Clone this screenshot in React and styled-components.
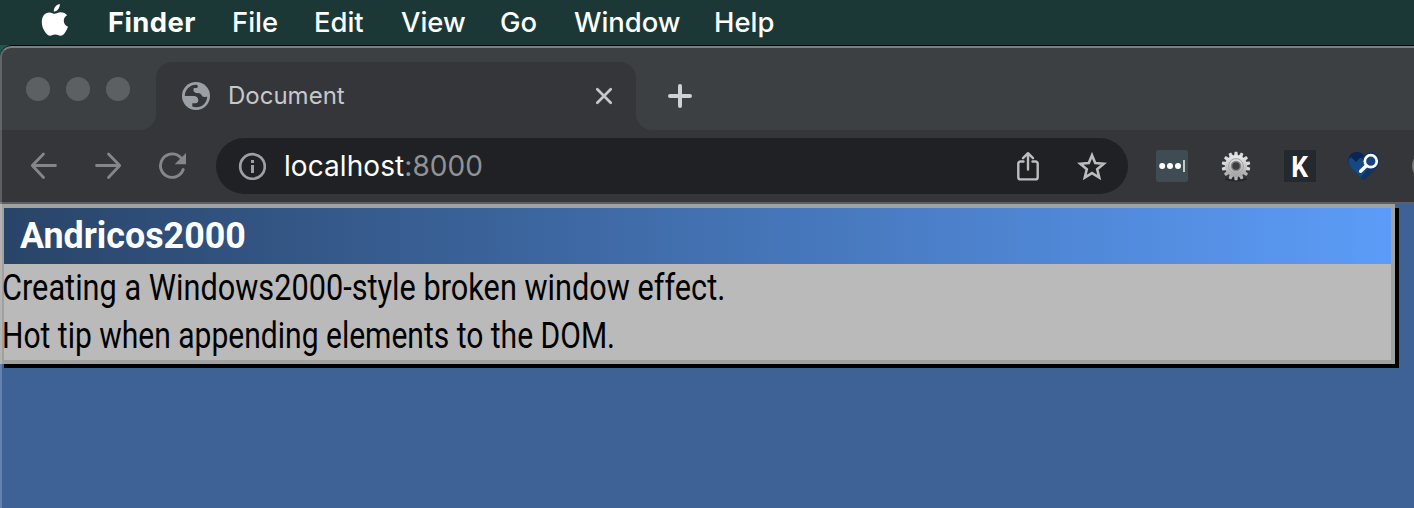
import React from "react";
import styled, { createGlobalStyle } from "styled-components";

const Global = createGlobalStyle`
  * { box-sizing: border-box; }
  html, body { margin: 0; padding: 0; }
  body { background: #1b3836; overflow: hidden; font-family: Inter, "Liberation Sans", sans-serif; }
  svg { display: block; flex: none; }
`;

const Desktop = styled.div`
  width: 1414px;
  height: 508px;
  display: flex;
  flex-direction: column;
  overflow: hidden;
  background: #1f5652;
`;

const MenuBar = styled.nav`
  flex: none;
  height: 45px;
  background: #1b3836;
  display: flex;
  align-items: flex-start;
  padding-left: 41px;
  color: #fff;
`;

const MenuItem = styled.span`
  flex: none;
  width: ${(p) => p.$width}px;
  font-size: 27.4px;
  line-height: 44px;
  white-space: nowrap;
  font-weight: ${(p) => (p.$bold ? 700 : 500)};
  letter-spacing: ${(p) => (p.$bold ? 0.4 : 0)}px;
`;

const AppleSlot = styled.span`
  width: 67px;
  margin-top: 4px;
`;

const BrowserWindow = styled.div`
  position: relative;
  flex: 1;
  display: flex;
  flex-direction: column;
  border-top: 1px solid #050807;
  border-radius: 12px 0 0 0;
  overflow: hidden;
  background: #3c4043;
  &::after {
    content: "";
    position: absolute;
    inset: 0 -20px -20px 0;
    border: 2px solid rgba(255, 255, 255, 0.2);
    border-top-color: rgba(255, 255, 255, 0.33);
    border-radius: 11px 0 0 0;
    pointer-events: none;
  }
`;

const TabStrip = styled.div`
  flex: none;
  height: 84px;
  padding: 16px 0 0 26px;
  display: flex;
  align-items: flex-start;
  background: #3c4043;
`;

const TrafficLights = styled.div`
  display: flex;
  gap: 16px;
  width: 130px;
  padding-top: 15px;
`;

const Light = styled.i`
  width: 24px;
  height: 24px;
  border-radius: 50%;
  background: #5d6063;
`;

const Tab = styled.div`
  position: relative;
  width: 480px;
  height: 68px;
  display: flex;
  align-items: center;
  padding: 0 22px 0 26px;
  border-radius: 16px 16px 0 0;
  background: #35363a;
  &::before, &::after {
    content: "";
    position: absolute;
    bottom: 0;
    width: 16px;
    height: 16px;
  }
  &::before {
    left: -16px;
    background: radial-gradient(circle at 0 0, transparent 15.5px, #35363a 16.2px);
  }
  &::after {
    right: -16px;
    background: radial-gradient(circle at 100% 0, transparent 15.5px, #35363a 16.2px);
  }
`;

const TabTitle = styled.span`
  flex: 1;
  margin-left: 18px;
  color: #c7c8ca;
  font-size: 24px;
  letter-spacing: 0;
  line-height: 68px;
`;

const NewTab = styled.div`
  padding: 22px 0 0 32px;
`;

const Toolbar = styled.div`
  flex: none;
  height: 74px;
  display: flex;
  align-items: flex-start;
  padding: 8px 0 0 30px;
  background: #35363a;
  border-bottom: 2px solid #5e5f62;
`;

const NavButtons = styled.div`
  flex: none;
  width: 186px;
  height: 56px;
  display: flex;
  align-items: center;
  gap: 36px;
`;

const AddressBar = styled.div`
  flex: none;
  width: 912px;
  height: 56px;
  display: flex;
  align-items: center;
  padding: 0 20px 0 22px;
  border-radius: 28px;
  background: #202124;
`;

const Address = styled.span`
  flex: 1;
  margin-left: 18px;
  font-size: 28px;
  letter-spacing: 0.07px;
  line-height: 56px;
  color: #fff;
`;

const Port = styled.span`
  color: #919295;
`;

const AddressActions = styled.div`
  display: flex;
  gap: 32px;
`;

const Extensions = styled.div`
  flex: none;
  display: flex;
  align-items: center;
  gap: 32px;
  height: 56px;
  padding-left: 28px;
`;

const KeyTile = styled.span`
  width: 32px;
  height: 32px;
  background: #242930;
  color: #fff;
  font: 700 30px/33px Roboto, sans-serif;
  text-align: center;
`;

const KeyGlyph = styled.span`
  display: inline-block;
  transform: scaleX(0.88);
`;

const Avatar = styled.i`
  flex: none;
  width: 32px;
  height: 32px;
  border-radius: 50%;
  background: #77787a;
`;

const Page = styled.main`
  flex: 1;
  background: #3e6296;
`;

const RetroWindow = styled.section`
  width: 1395px;
  height: 160px;
  border: 4px solid #a1a1a0;
  box-shadow: 4px 4px 0 #000;
  background: #bababa;
  font-family: Roboto, "Liberation Sans", sans-serif;
`;

const RetroTitle = styled.h1`
  margin: 0;
  height: 56px;
  padding-left: 16px;
  background: linear-gradient(to right, #294468, #5c9cf8);
  color: #fff;
  font-size: 36px;
  font-weight: 700;
  line-height: 56px;
`;

const RetroLine = styled.p`
  margin: 0 0 0 -2px;
  height: 48px;
  color: #000;
  font-size: 36px;
  line-height: 48px;
  white-space: nowrap;
`;

const Squeeze = styled.span`
  display: inline-block;
  transform: scaleX(${(p) => p.$x});
  transform-origin: 0 50%;
`;

const AppleIcon = () => (
  <svg width="27" height="33" viewBox="0 0 27 33" fill="#fff">
    <path d="M18.8 0c.2 2-.6 3.900-1.700 5.300-1.200 1.500-2.900 2.400-4.300 2.200-.2-1.900.6-3.800 1.700-5.100C15.600 1 17.500.1 18.800 0z" />
    <path d="M26.100 11.300c-2.100 1.200-3.300 3-3.300 5.500 0 2.900 1.700 5 4.200 6-.6 1.900-1.500 3.600-2.600 5.200-1.300 2-2.800 3.800-5 3.800-2 0-2.700-1.200-5.100-1.200s-3.200 1.200-5.100 1.200c-2.300 0-3.900-2-5.300-4C1.700 24.700.8 21.300.8 17.800.8 12.200 4 8.400 8.300 8.400c2.300 0 4.100 1.400 5.500 1.400s3.300-1.500 5.900-1.500c2.500 0 4.900 1.200 6.400 3z" />
  </svg>
);

const GlobeIcon = () => (
  <svg width="28" height="28" viewBox="0 0 28 28">
    <circle cx="14" cy="14" r="14" fill="#9aa0a6" />
    <path d="M2.800 14C2.800 8.300 7.300 3.200 13.600 2.800 16.200 2.700 16.400 4.600 15 6h-2.300c-.9 0-1.300.7-1.300 1.600 0 1.600.9 3.200 2.800 3.500l3.200.2c2.100.3 2.300 3.800 4.900 3.700l2.900-.3C25 20.500 20.700 25.200 14 25.200c-1.500 0-2.700-.3-3.700-.7v-3.300h3.200c1.700 0 2.800-1.200 2.800-3 0-2.400-1.900-4.200-4.300-4.200z" fill="#35363a" />
  </svg>
);

const CloseIcon = () => (
  <svg width="20" height="20" viewBox="0 0 20 20" fill="none" stroke="#c7c8ca" strokeWidth="2.700" strokeLinecap="round">
    <path d="M3.300 3.300 16.700 16.700M16.700 3.300 3.300 16.700" />
  </svg>
);

const PlusIcon = () => (
  <svg width="24" height="24" viewBox="0 0 24 24" fill="none" stroke="#d0d1d2" strokeWidth="4" strokeLinecap="round">
    <path d="M12 2v20M2 12h20" />
  </svg>
);

const ArrowIcon = ({ flip }) => (
  <svg width="28" height="28" viewBox="0 0 28 28" fill="none" stroke="#858688" strokeWidth="2.800" strokeLinecap="round" strokeLinejoin="round">
    <g transform={flip ? "translate(28 0) scale(-1 1)" : undefined}>
      <path d="M25.500 13.500H2.500M13.500 2 2.300 13.500 13.500 25.500" />
    </g>
  </svg>
);

const ReloadIcon = () => (
  <svg width="28" height="28" viewBox="0 0 28 28" fill="none" stroke="#858688" strokeWidth="2.900">
    <path d="M25.200 17.500A11.700 11.700 0 1 1 22.600 5.500" strokeLinecap="round" />
    <path d="M28 1v11.200H16.700z" fill="#858688" stroke="none" />
  </svg>
);

const InfoIcon = () => (
  <svg width="28" height="28" viewBox="0 0 28 28" fill="none" stroke="#9aa0a6" strokeWidth="2.700">
    <circle cx="14.500" cy="14.500" r="12.300" />
    <path d="M14.500 13v8M14.500 8v3" strokeWidth="3" />
  </svg>
);

const ShareIcon = () => (
  <svg width="32" height="32" viewBox="0 0 32 32" fill="none" stroke="#bcbdbe" strokeWidth="2.400" strokeLinecap="round" strokeLinejoin="round">
    <path d="M11.500 11.500H8.500a2.200 2.200 0 0 0-2.200 2.200v13.500a2.200 2.200 0 0 0 2.200 2.200h15a2.200 2.200 0 0 0 2.200-2.200V13.700a2.200 2.200 0 0 0-2.200-2.200h-3" />
    <path d="M16 19.500V3.500M11 8.200l5-5 5 5" />
  </svg>
);

const StarIcon = () => (
  <svg width="32" height="32" viewBox="0 0 32 32" fill="none" stroke="#bcbdbe" strokeWidth="2.600">
    <path d="m16 5.300 3.200 7.800 8.500.7-6.500 5.500 2 8.200-7.200-4.400-7.200 4.400 2-8.200-6.500-5.500 8.500-.7z" />
  </svg>
);

const DotsIcon = () => (
  <svg width="32" height="32" viewBox="0 0 32 32">
    <rect width="32" height="32" rx="2.500" fill="#404c54" />
    <g fill="#fff">
      <circle cx="6.200" cy="16" r="3" />
      <circle cx="14" cy="16" r="3" />
      <circle cx="22" cy="16" r="3" />
      <rect x="27" y="10" width="2" height="12" fill="#c5c9cc" />
    </g>
  </svg>
);

const GearIcon = () => (
  <svg width="32" height="32" viewBox="0 0 32 32">
    <defs>
      <linearGradient id="steel" x1="0" y1="0" x2="0" y2="1">
        <stop offset="0" stopColor="#ededed" />
        <stop offset="1" stopColor="#a2a2a2" />
      </linearGradient>
    </defs>
    <ellipse cx="16" cy="29" rx="11" ry="2.500" fill="#252629" />
    {Array.from({ length: 14 }, (_, i) => (
      <path key={i} d="M13.900 7 14.600 1.700h2.800l.7 5.300z" fill={i > 4 && i < 10 ? "#b4b4b4" : "#dcdcdc"} transform={`rotate(${(i * 360) / 14} 16 16)`} />
    ))}
    <circle cx="16" cy="16" r="11" fill="url(#steel)" />
    <circle cx="16" cy="16" r="7.400" fill="none" stroke="#a4a4a4" strokeWidth="1" />
    <circle cx="16" cy="16" r="4.500" fill="#3b3c3f" stroke="#858585" strokeWidth="1.500" />
  </svg>
);

const HeartIcon = () => (
  <svg width="32" height="32" viewBox="0 0 32 32">
    <path d="M16 30.500 2.500 17C-1.500 12 .5 2 9 2c3.500 0 5.500 1.300 7 3.200C17.500 3.300 19.500 2 23 2c8.500 0 10.500 10 6.500 15z" fill="#113365" />
    <path d="M9 2c3.500 0 5.500 1.300 7 3.200L4.500 17 1.800 15.800C-1.500 11 .5 2 9 2z" fill="#0b2553" />
    <path d="M.6 9.500 3 7l5 5 4.500-4.500L22 17l-9.500 10L2.500 17C1 15 .3 12 .6 9.500z" fill="#174981" />
    <circle cx="22.800" cy="11.200" r="6" fill="#1c427c" stroke="#fff" strokeWidth="2.700" />
    <path d="m18.300 15.800-5.700 5.500" stroke="#fff" strokeWidth="3.400" strokeLinecap="round" />
  </svg>
);

export default function App() {
  return (
    <Desktop>
      <Global />
      <MenuBar>
        <AppleSlot><AppleIcon /></AppleSlot>
        <MenuItem $width={124} $bold>Finder</MenuItem>
        <MenuItem $width={82}>File</MenuItem>
        <MenuItem $width={87}>Edit</MenuItem>
        <MenuItem $width={99}>View</MenuItem>
        <MenuItem $width={74}>Go</MenuItem>
        <MenuItem $width={140}>Window</MenuItem>
        <MenuItem $width={80}>Help</MenuItem>
      </MenuBar>
      <BrowserWindow>
        <TabStrip>
          <TrafficLights><Light /><Light /><Light /></TrafficLights>
          <Tab>
            <GlobeIcon />
            <TabTitle>Document</TabTitle>
            <CloseIcon />
          </Tab>
          <NewTab><PlusIcon /></NewTab>
        </TabStrip>
        <Toolbar>
          <NavButtons><ArrowIcon /><ArrowIcon flip /><ReloadIcon /></NavButtons>
          <AddressBar>
            <InfoIcon />
            <Address>localhost<Port>:8000</Port></Address>
            <AddressActions><ShareIcon /><StarIcon /></AddressActions>
          </AddressBar>
          <Extensions>
            <DotsIcon />
            <GearIcon />
            <KeyTile><KeyGlyph>K</KeyGlyph></KeyTile>
            <HeartIcon />
            <Avatar />
          </Extensions>
        </Toolbar>
        <Page>
          <RetroWindow>
            <RetroTitle><Squeeze $x={0.995}>Andricos2000</Squeeze></RetroTitle>
            <RetroLine><Squeeze $x={0.853}>Creating a Windows2000-style broken window effect.</Squeeze></RetroLine>
            <RetroLine><Squeeze $x={0.834}>Hot tip when appending elements to the DOM.</Squeeze></RetroLine>
          </RetroWindow>
        </Page>
      </BrowserWindow>
    </Desktop>
  );
}
